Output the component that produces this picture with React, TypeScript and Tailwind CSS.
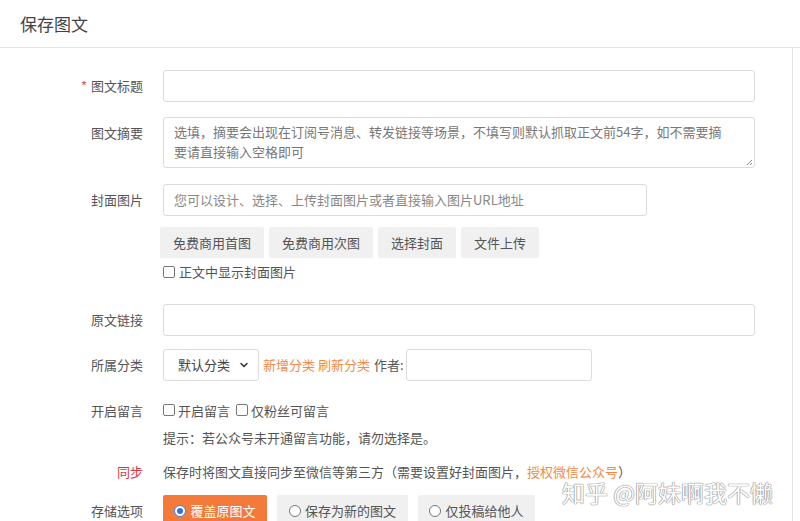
import { ChevronDown } from "lucide-react";

const font = { fontFamily: '"Noto Sans CJK SC", "Noto Sans", sans-serif' };

function Box() {
  return <span className="inline-block h-[12px] w-[12px] shrink-0 rounded-[2px] border border-[#777] bg-white" />;
}

function Label({ children, red }: { children: React.ReactNode; red?: boolean }) {
  return (
    <div className={`w-[143px] shrink-0 text-right ${red ? "text-[#d9363e]" : "text-[#555]"}`}>
      {children}
    </div>
  );
}

const input = "h-[32px] rounded-[3px] border border-[#dcdcdc] bg-white";

export default function App() {
  return (
    <div className="relative h-[521px] w-[800px] overflow-hidden bg-white text-[13px] text-[#555]" style={font}>
      <div className="flex h-[48px] items-center border-b border-[#e6e6e6] px-[20px] text-[17px] text-[#444]">
        保存图文
      </div>
      <div className="h-[473px] w-[793px] border-r border-[#e3e3e3] pt-[22px]">
        <div className="flex items-center gap-[20px]">
          <Label>
            <span className="mr-[4px] text-[#e05050]">*</span>图文标题
          </Label>
          <div className={`${input} w-[592px]`} />
        </div>

        <div className="mt-[15px] flex items-start gap-[20px]">
          <Label>
            <div className="pt-[6px]">图文摘要</div>
          </Label>
          <div className="relative h-[51px] w-[592px] rounded-[3px] border border-[#dcdcdc] px-[10px] pt-[4px] leading-[20px] text-[#777]">
            选填，摘要会出现在订阅号消息、转发链接等场景，不填写则默认抓取正文前54字，如不需要摘
            <br />
            要请直接输入空格即可
            <svg className="absolute bottom-[1px] right-[1px]" width="8" height="8" viewBox="0 0 8 8">
              <path d="M7 2L2 7M7 5L5 7" stroke="#888" strokeWidth="1" />
            </svg>
          </div>
        </div>

        <div className="mt-[16px] flex items-center gap-[20px]">
          <Label>封面图片</Label>
          <div className={`${input} flex w-[484px] items-center px-[10px] text-[#888]`}>
            您可以设计、选择、上传封面图片或者直接输入图片URL地址
          </div>
        </div>
        <div className="ml-[160px] mt-[11px] flex gap-[5px]">
          {["免费商用首图", "免费商用次图", "选择封面", "文件上传"].map((b) => (
            <div key={b} className="flex h-[31px] items-center rounded-[2px] bg-[#f0f0f0] px-[13px] text-[#555]">
              {b}
            </div>
          ))}
        </div>
        <div className="ml-[163px] mt-[4px] flex items-center gap-[4px]">
          <Box />
          正文中显示封面图片
        </div>

        <div className="mt-[22px] flex items-center gap-[20px]">
          <Label>原文链接</Label>
          <div className={`${input} w-[592px]`} />
        </div>

        <div className="mt-[13px] flex items-center gap-[20px]">
          <Label>所属分类</Label>
          <div className="flex items-center gap-[4px]">
            <div className={`${input} flex w-[96px] items-center justify-between pl-[14px] pr-[8px] text-[#444]`}>
              默认分类
              <ChevronDown size={12} strokeWidth={3} className="text-[#333]" />
            </div>
            <span className="text-[#f08a4b]">新增分类 刷新分类</span>
            <span className="text-[#555]">作者:</span>
            <div className={`${input} ml-[-2px] w-[186px]`} />
          </div>
        </div>

        <div className="mt-[20px] flex items-center gap-[20px]">
          <Label>开启留言</Label>
          <div className="flex items-center gap-[3px]">
            <Box />
            <span className="mr-[3px]">开启留言</span>
            <Box />
            <span>仅粉丝可留言</span>
          </div>
        </div>
        <div className="ml-[163px] mt-[8px] leading-[20px]">提示：若公众号未开通留言功能，请勿选择是。</div>

        <div className="mt-[14px] flex items-center gap-[20px]">
          <Label red>同步</Label>
          <div>
            保存时将图文直接同步至微信等第三方（需要设置好封面图片，
            <span className="text-[#f08a4b]">授权微信公众号</span>）
          </div>
        </div>

        <div className="mt-[13px] flex items-center gap-[20px]">
          <Label>存储选项</Label>
          <div className="flex gap-[10px]">
            <div className="flex h-[32px] w-[104px] items-center justify-center gap-[4px] rounded-[2px] bg-[#f47a3c] text-white">
              <span className="flex h-[12px] w-[12px] items-center justify-center rounded-full border border-[#3b82f6] bg-white">
                <span className="h-[6px] w-[6px] rounded-full bg-[#2f73e0]" />
              </span>
              覆盖原图文
            </div>
            <div className="flex h-[32px] w-[131px] items-center justify-center gap-[4px] rounded-[2px] bg-[#f0f0f0]">
              <span className="h-[12px] w-[12px] rounded-full border border-[#777] bg-white" />
              保存为新的图文
            </div>
            <div className="flex h-[32px] w-[117px] items-center justify-center gap-[4px] rounded-[2px] bg-[#f0f0f0]">
              <span className="h-[12px] w-[12px] rounded-full border border-[#777] bg-white" />
              仅投稿给他人
            </div>
          </div>
        </div>
      </div>

      <div
        className="absolute left-[562px] top-[477px] text-[23px] leading-[30px] text-white"
        style={{ textShadow: "0 0 1px #888, 0 0 1px #888, 0 0 1px #888" }}
      >
        知乎 @阿妹啊我不懒
      </div>
    </div>
  );
}
